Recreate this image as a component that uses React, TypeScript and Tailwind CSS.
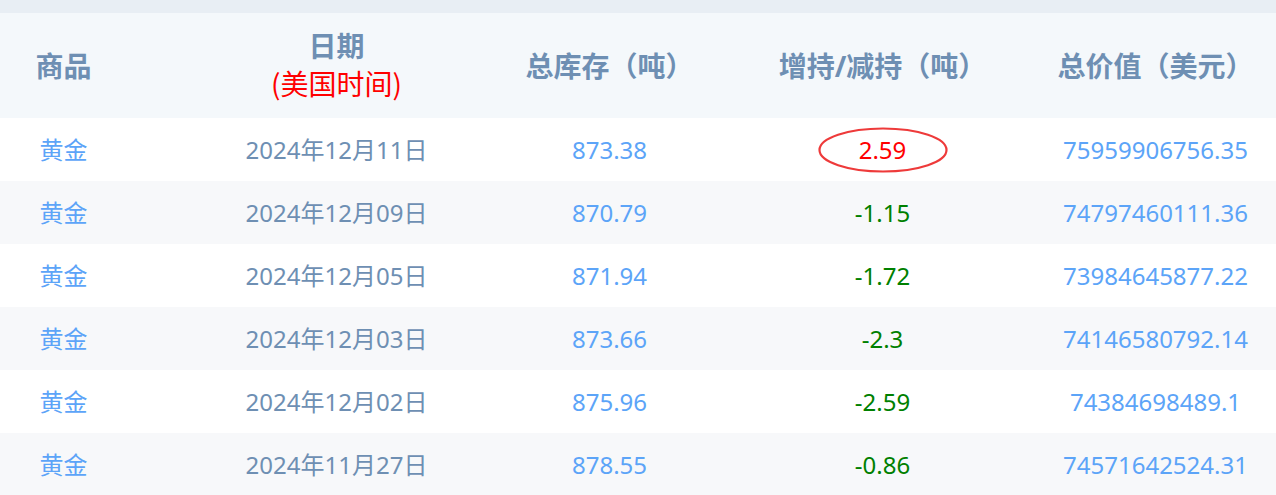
import React from "react";

type Row = { date: string; total: string; change: string; value: string };

const rows: Row[] = [
  { date: "2024年12月11日", total: "873.38", change: "2.59", value: "75959906756.35" },
  { date: "2024年12月09日", total: "870.79", change: "-1.15", value: "74797460111.36" },
  { date: "2024年12月05日", total: "871.94", change: "-1.72", value: "73984645877.22" },
  { date: "2024年12月03日", total: "873.66", change: "-2.3", value: "74146580792.14" },
  { date: "2024年12月02日", total: "875.96", change: "-2.59", value: "74384698489.1" },
  { date: "2024年11月27日", total: "878.55", change: "-0.86", value: "74571642524.31" },
];

const gridCols = "grid grid-cols-[200px_273px_273px_273px_273px]";

export default function App() {
  return (
    <div
      className="w-[1276px] h-[495px] overflow-hidden bg-white"
      style={{ fontFamily: '"Noto Sans", "Noto Sans CJK SC", sans-serif' }}
    >
      <div className="h-[13px] bg-[#e8eef4]" />
      <div className={`${gridCols} h-[105px] bg-[#f4f8fb] items-center text-[28px] font-bold text-[#6e8fb3]`}>
        <div className="pr-[73px] text-center">商品</div>
        <div className="flex flex-col items-center leading-[37px] -mt-[1px]">
          <span>日期</span>
          <span className="font-normal text-[#ff0000]" style={{ fontFamily: '"Noto Sans CJK SC", sans-serif' }}>(美国时间)</span>
        </div>
        <div className="text-center">总库存（吨）</div>
        <div className="text-center">增持/减持（吨）</div>
        <div className="text-center">总价值（美元）</div>
      </div>
      {rows.map((r, i) => {
        const up = !r.change.startsWith("-");
        return (
          <div
            key={i}
            className={`${gridCols} h-[63px] items-center text-[24px] ${i % 2 === 0 ? "bg-white" : "bg-[#f7f8fa]"}`}
          >
            <div className="pr-[73px] text-center text-[#5ca4f8]">黄金</div>
            <div className="text-center text-[#6e8fb3]">{r.date}</div>
            <div className="text-center text-[#5ca4f8]">{r.total}</div>
            <div className="relative flex justify-center">
              <span className={up ? "text-[#ff0000]" : "text-[#008000]"}>{r.change}</span>
              {i === 0 && (
                <svg
                  className="absolute left-1/2 top-1/2 -translate-x-1/2 -translate-y-1/2"
                  width="132"
                  height="48"
                  viewBox="0 0 132 48"
                >
                  <ellipse cx="66" cy="24" rx="63.5" ry="21.5" fill="none" stroke="#ee3a3a" strokeWidth="2.2" />
                </svg>
              )}
            </div>
            <div className="text-center text-[#5ca4f8]">{r.value}</div>
          </div>
        );
      })}
    </div>
  );
}
